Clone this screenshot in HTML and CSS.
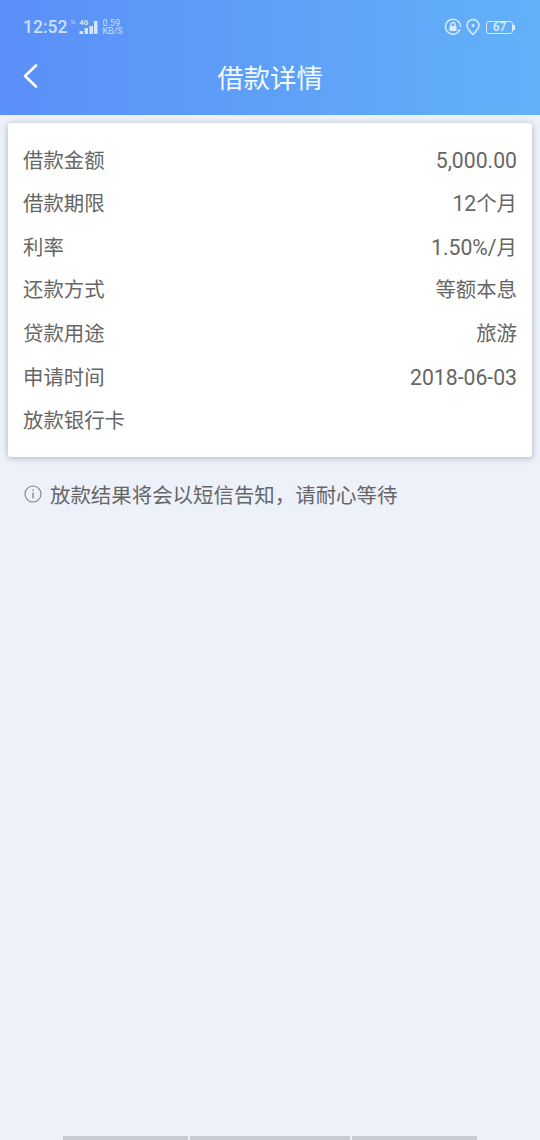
FILE: index.html
```html
<!DOCTYPE html>
<html lang="zh-CN">

<head>
  <meta charset="UTF-8">
  <meta name="viewport" content="width=device-width, initial-scale=1.0">
  <title>借款详情</title>
  <link rel="stylesheet" href="styles.css">
</head>

<body>
  <header class="header">
    <div class="status">
      <div class="status-left">
        <span class="clock">12:52</span>
        <svg class="signal" width="28" height="16" viewBox="0 0 28 16">
          <path d="M2 1v4M2 1L1 2M4 5V1M4 5l1-1" stroke="#cfe0fb" stroke-width="0.7" fill="none" />
          <text x="9.5" y="6" class="net">4G</text>
          <rect x="9.5" y="12" width="3.5" height="3" fill="#d6e4fc" />
          <rect x="14.5" y="9" width="3.5" height="6" fill="#d6e4fc" />
          <rect x="19.5" y="7" width="3.5" height="8" fill="#d6e4fc" />
          <rect x="24" y="2" width="3.5" height="13" fill="#d6e4fc" />
        </svg>
        <span class="speed">0.59<br>KB/S</span>
      </div>
      <div class="status-right">
        <svg width="18" height="18" viewBox="0 0 18 18" fill="none" stroke="#d9ecff" stroke-width="1.4">
          <path d="M15.5 12.5A7.5 7.5 0 1 1 16.5 9" />
          <path d="M13.5 12.5l2 .5.5-2" stroke-width="1" />
          <rect x="5.5" y="8" width="7" height="5" fill="#d9ecff" stroke="none" />
          <path d="M7 8V6.5a2 2 0 0 1 4 0V8" />
        </svg>
        <svg width="14" height="18" viewBox="0 0 14 18" fill="none" stroke="#d9ecff" stroke-width="1.5">
          <path d="M7 16.5C3.5 13 1 10.5 1 7.5a6 6 0 0 1 12 0c0 3-2.5 5.5-6 9z" />
          <circle cx="7" cy="7.5" r="0.8" />
        </svg>
        <div class="battery">67</div>
      </div>
    </div>
    <div class="navbar">
      <svg class="back" width="18" height="26" viewBox="0 0 18 26" fill="none" stroke="#fff" stroke-width="2.6"
        stroke-linecap="round" stroke-linejoin="round">
        <path d="M14 2.5L3 13l11 10.5" />
      </svg>
      <h1 class="title">借款详情</h1>
    </div>
  </header>

  <main class="main">
    <section class="card">
      <div class="row"><span>借款金额</span><span class="num">5,000.00</span></div>
      <div class="row"><span>借款期限</span><span><span class="num">12</span>个月</span></div>
      <div class="row"><span>利率</span><span><span class="num">1.50%/</span>月</span></div>
      <div class="row"><span>还款方式</span><span>等额本息</span></div>
      <div class="row"><span>贷款用途</span><span>旅游</span></div>
      <div class="row"><span>申请时间</span><span class="num">2018-06-03</span></div>
      <div class="row"><span>放款银行卡</span><span></span></div>
    </section>
    <p class="notice">
      <svg width="18" height="18" viewBox="0 0 18 18" fill="none" stroke="#7d838c" stroke-width="1.1">
        <circle cx="9" cy="9" r="8" />
        <path d="M9 7.5V13.5" stroke-width="1.3" />
        <path d="M9 4.5V6" stroke-width="1.3" />
      </svg>
      <span>放款结果将会以短信告知，请耐心等待</span>
    </p>
  </main>

  <div class="home-bar">
    <i class="seg-a"></i>
    <i class="seg-b"></i>
    <i class="seg-c"></i>
  </div>
</body>

</html>
```

FILE: styles.css
```css
* {
  box-sizing: border-box;
}

html,
body {
  margin: 0;
  height: 100%;
}

body {
  width: 540px;
  height: 1140px;
  display: flex;
  flex-direction: column;
  overflow: hidden;
  background: #edf1fa;
  font-family: "Roboto", "Noto Sans CJK SC", sans-serif;
  color: #666;
}

.header {
  height: 115px;
  padding: 0 23px;
  background: linear-gradient(90deg, #5a8ff8, #62b1f8);
}

.status {
  height: 54px;
  display: flex;
  justify-content: space-between;
  align-items: center;
}

.status-left,
.status-right {
  display: flex;
  align-items: center;
}

.clock {
  font-size: 17.5px;
  font-weight: 500;
  color: #cfdffb;
}

.signal {
  margin-left: 3px;
}

.net {
  font-size: 7px;
  font-weight: bold;
  fill: #d6e4fc;
}

.speed {
  margin-left: 4px;
  font-size: 9px;
  line-height: 8px;
  color: #cfdffb;
}

.status-right {
  gap: 4px;
}

.battery {
  width: 27px;
  height: 13px;
  margin: 0 4px 0 2px;
  position: relative;
  border: 1px solid #d9ecff;
  border-radius: 3px;
  font-size: 12px;
  font-weight: 500;
  line-height: 11px;
  text-align: center;
  color: #d9ecff;
}

.battery::after {
  content: "";
  position: absolute;
  right: -3px;
  top: 3px;
  width: 2px;
  height: 5px;
  background: #d9ecff;
}

.navbar {
  height: 44px;
  position: relative;
  display: flex;
  justify-content: center;
  align-items: center;
}

.back {
  position: absolute;
  left: -1px;
  top: 9px;
}

.title {
  margin: 0;
  font-size: 26.4px;
  font-weight: 400;
  color: #f4f8ff;
}

.main {
  flex: 1;
  padding: 8px 8px 0 7.5px;
}

.card {
  height: 334px;
  padding: 15.8px 15px 0 15.5px;
  background: #fff;
  border-radius: 3px;
  box-shadow: 0 1px 6px rgba(90, 100, 120, 0.45);
}

.row {
  height: 43.5px;
  display: flex;
  justify-content: space-between;
  align-items: baseline;
  font-size: 20.4px;
  line-height: 43.5px;
  color: #666;
}

.num {
  font-size: 21.2px;
}

.notice {
  margin: 22px 0 0 16.5px;
  display: flex;
  align-items: center;
  gap: 8px;
  font-size: 20.45px;
  color: #666;
}

.home-bar {
  height: 4px;
  padding-left: 63px;
  display: flex;
  gap: 2px;
}

.home-bar i {
  height: 4px;
  background: #c8cbd3;
}

.seg-a {
  width: 125px;
}

.seg-b {
  width: 160px;
}

.seg-c {
  width: 125px;
}
```
